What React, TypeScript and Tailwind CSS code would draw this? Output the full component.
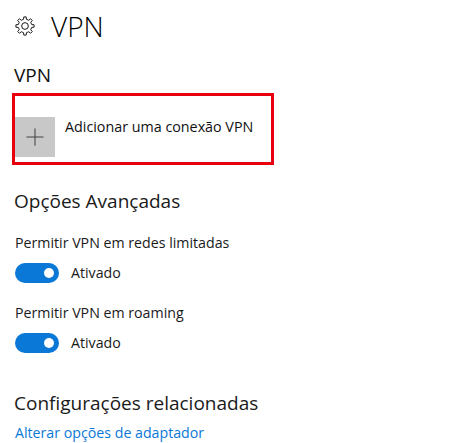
import { Plus } from "lucide-react";

const font = { fontFamily: '"Open Sans", "Noto Sans", sans-serif' };

// gear outline with 8 teeth, built once from polar points
const gearPath = (() => {
  const pts: string[] = [];
  const teeth = 8;
  for (let i = 0; i < teeth; i++) {
    const a = (i / teeth) * Math.PI * 2 - Math.PI / 2;
    const step = (Math.PI * 2) / teeth;
    const at = (r: number, d: number) =>
      `${(12 + r * Math.cos(a + d * step)).toFixed(2)} ${(12 + r * Math.sin(a + d * step)).toFixed(2)}`;
    pts.push(at(8.2, -0.27), at(11, -0.17), at(11, 0.17), at(8.2, 0.27));
  }
  return `M${pts.join("L")}Z`;
})();

function GearIcon() {
  return (
    <svg width="20" height="20" viewBox="0 0 24 24" fill="none" stroke="#1c1c1c" strokeWidth="1.2">
      <path d={gearPath} strokeLinejoin="round" />
      <circle cx="12" cy="12" r="4" />
    </svg>
  );
}

function ToggleRow({ label }: { label: string }) {
  return (
    <div className="flex flex-col">
      <p className="text-[14.2px] leading-[20px] text-[#1a1a1a]">{label}</p>
      <div className="mt-[10px] flex items-center">
        <div className="flex h-[20px] w-[44px] items-center justify-end rounded-full bg-[#0a78d7] pr-[5px]">
          <div className="h-[10px] w-[10px] rounded-full bg-white" />
        </div>
        <span className="ml-[12px] text-[14.2px] leading-[20px] text-[#1a1a1a]">Ativado</span>
      </div>
    </div>
  );
}

export default function App() {
  return (
    <div className="h-[443px] w-[471px] overflow-hidden bg-white pl-[15px] text-black" style={font}>
      <div className="flex items-center pt-[8px]">
        <GearIcon />
        <h1 className="ml-[16px] text-[28px] font-light leading-[36px]">VPN</h1>
      </div>

      <h2 className="-ml-px mt-[19px] text-[19px] leading-[24px] text-[#111]">VPN</h2>

      <div className="-ml-[3px] mt-[6px] flex h-[72px] w-[262px] items-end border-[3px] border-[#e8000f] pb-[5px]">
        <div className="flex h-[40px] w-[40px] items-center justify-center bg-[#c8c8c8]">
          <Plus size={28} strokeWidth={0.9} className="text-[#444]" />
        </div>
        <span className="mb-[20px] ml-[10px] text-[14.3px] leading-[20px] text-[#111]">Adicionar uma conexão VPN</span>
      </div>

      <h2 className="-ml-px mt-[23px] text-[19px] leading-[26px] text-[#1a1a1a]">Opções Avançadas</h2>

      <div className="mt-[19px] flex flex-col gap-[20px]">
        <ToggleRow label="Permitir VPN em redes limitadas" />
        <ToggleRow label="Permitir VPN em roaming" />
      </div>

      <h2 className="-ml-px mt-[37px] text-[19px] leading-[26px] text-[#1a1a1a]">Configurações relacionadas</h2>
      <a className="mt-[7px] block text-[14.2px] leading-[20px] text-[#0a78d7]">Alterar opções de adaptador</a>
    </div>
  );
}
